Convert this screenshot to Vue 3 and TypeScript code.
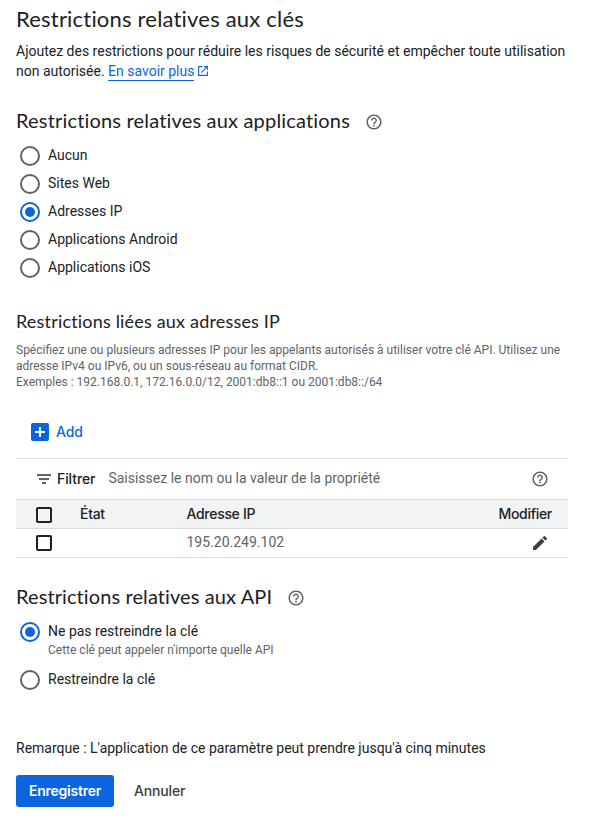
<script setup lang="ts">
import { ref } from 'vue'

interface Option {
  value: string
  label: string
  hint?: string
}

const appOptions: Option[] = [
  { value: 'none', label: 'Aucun' },
  { value: 'web', label: 'Sites Web' },
  { value: 'ip', label: 'Adresses IP' },
  { value: 'android', label: 'Applications Android' },
  { value: 'ios', label: 'Applications iOS' },
]
const apiOptions: Option[] = [
  { value: 'all', label: 'Ne pas restreindre la clé', hint: "Cette clé peut appeler n'importe quelle API" },
  { value: 'some', label: 'Restreindre la clé' },
]
const addresses: string[] = ['195.20.249.102']

const appChoice = ref('ip')
const apiChoice = ref('all')

const helpPath =
  'M11 18h2v-2h-2v2zm1-16C6.48 2 2 6.48 2 12s4.48 10 10 10 10-4.48 10-10S17.52 2 12 2zm0 18c-4.41 0-8-3.59-8-8s3.59-8 8-8 8 3.59 8 8-3.59 8-8 8zm0-14c-2.21 0-4 1.79-4 4h2c0-1.1.9-2 2-2s2 .9 2 2c0 2-3 1.75-3 5h2c0-2.25 3-2.5 3-5 0-2.21-1.79-4-4-4z'
</script>

<template>
  <main class="page">
    <h1 class="title"><span>Restrictions relatives aux clés</span></h1>
    <p class="intro">
      Ajoutez des restrictions pour réduire les risques de sécurité et empêcher toute utilisation<br />
      non autorisée.
      <a class="link">En savoir plus</a>
      <svg class="external" viewBox="0 0 10 10" fill="none" stroke="currentColor" stroke-width="1.1">
        <path d="M4.4 .6H.6v8.8h8.8V5.6M6 .6h3.4V4M9.4.6 3.3 6.7" />
      </svg>
    </p>

    <h2 class="section apps">
      <span>Restrictions relatives aux applications</span>
      <svg class="help" viewBox="0 0 24 24"><path :d="helpPath" /></svg>
    </h2>
    <div class="options">
      <label v-for="o in appOptions" :key="o.value" class="option" @click="appChoice = o.value">
        <span class="radio" :class="{ on: appChoice === o.value }"></span>
        <span class="label">{{ o.label }}</span>
      </label>
    </div>

    <h3 class="subsection"><span>Restrictions liées aux adresses IP</span></h3>
    <p class="description">
      Spécifiez une ou plusieurs adresses IP pour les appelants autorisés à utiliser votre clé API. Utilisez une<br />
      adresse IPv4 ou IPv6, ou un sous-réseau au format CIDR.<br />
      Exemples : 192.168.0.1, 172.16.0.0/12, 2001:db8::1 ou 2001:db8::/64
    </p>

    <button class="add">
      <svg viewBox="0 0 18 18">
        <rect width="18" height="18" rx="2" fill="#0b65de" />
        <path d="M9 4v10M4 9h10" stroke="#fff" stroke-width="2" />
      </svg>
      <span>Add</span>
    </button>

    <section class="table">
      <div class="filter">
        <svg class="funnel" viewBox="0 0 14 10"><path d="M0 0h14v2H0zM2 4h10v2H2zM5 8h4v2H5z" /></svg>
        <span class="filter-name">Filtrer</span>
        <span class="placeholder">Saisissez le nom ou la valeur de la propriété</span>
        <svg class="help" viewBox="0 0 24 24"><path :d="helpPath" /></svg>
      </div>
      <div class="row head">
        <span class="box"></span>
        <span class="state">État</span>
        <span class="address">Adresse IP</span>
        <span class="edit">Modifier</span>
      </div>
      <div v-for="ip in addresses" :key="ip" class="row entry">
        <span class="box"></span>
        <span></span>
        <span class="ip">{{ ip }}</span>
        <svg class="pencil" viewBox="3 3 18 18">
          <path d="M3 17.25V21h3.75L17.81 9.94l-3.75-3.75L3 17.25zM20.71 7.04c.39-.39.39-1.02 0-1.41l-2.34-2.34c-.39-.39-1.02-.39-1.41 0l-1.83 1.83 3.75 3.75 1.83-1.83z" />
        </svg>
      </div>
    </section>

    <h2 class="section api">
      <span>Restrictions relatives aux API</span>
      <svg class="help" viewBox="0 0 24 24"><path :d="helpPath" /></svg>
    </h2>
    <div class="options api-options">
      <label v-for="o in apiOptions" :key="o.value" class="option" @click="apiChoice = o.value">
        <span class="radio" :class="{ on: apiChoice === o.value }"></span>
        <span class="label">
          {{ o.label }}
          <small v-if="o.hint">{{ o.hint }}</small>
        </span>
      </label>
    </div>

    <p class="note">Remarque : L'application de ce paramètre peut prendre jusqu'à cinq minutes</p>
    <div class="actions">
      <button class="save">Enregistrer</button>
      <button class="cancel">Annuler</button>
    </div>
  </main>
</template>

<style>
body {
  background: #fff;
}
</style>

<style scoped>
.page {
  box-sizing: border-box;
  width: 592px;
  height: 827px;
  padding: 5px 24px 0 16px;
  overflow: hidden;
  color: #202124;
  font: 400 14px/20px Roboto, sans-serif;
}
h1, h2, h3, p {
  margin: 0;
  font-weight: 400;
  white-space: nowrap;
}
h1, h2, h3 {
  font-family: Lato, sans-serif;
  font-variant-ligatures: none;
  letter-spacing: 0.18px;
}
button {
  border: 0;
  padding: 0;
  background: none;
  color: inherit;
  font: 500 14px/20px Inter, sans-serif;
  letter-spacing: -0.15px;
}
svg {
  flex: none;
  fill: currentColor;
}
.title {
  height: 36px;
  font-size: 22px;
  line-height: 28px;
  letter-spacing: 0.2px;
}
.link {
  color: #0b65de;
  border-bottom: 1px solid #0b65de;
  padding-bottom: 1px;
}
.external {
  width: 10px;
  height: 10px;
  margin-left: 4px;
  color: #0b65de;
  fill: none;
}
.section {
  display: flex;
  align-items: center;
  height: 28px;
  font-size: 20px;
  line-height: 28px;
}
.section span {
  margin-top: -2px;
}
.apps {
  margin-top: 26px;
}
.help {
  width: 18px;
  height: 18px;
  margin-left: 15px;
  color: #5f6368;
}
.section .help {
  margin-top: 2px;
}
.options {
  margin-top: 6px;
}
.option {
  display: flex;
  height: 28px;
  padding-left: 4px;
}
.radio {
  box-sizing: border-box;
  flex: none;
  display: grid;
  place-items: center;
  width: 20px;
  height: 20px;
  margin: 5px 8px 0 0;
  border: 2px solid #5f6368;
  border-radius: 50%;
}
.radio.on {
  border-color: #0b65de;
}
.radio.on::after {
  content: '';
  width: 10px;
  height: 10px;
  border-radius: 50%;
  background: #0b65de;
}
.label {
  padding-top: 4px;
}
small {
  display: block;
  padding-top: 1px;
  color: #5f6368;
  font-size: 12px;
  line-height: 16px;
}
.subsection {
  margin-top: 28px;
  height: 33px;
  font-size: 18px;
  line-height: 24px;
}
.description {
  color: #5f6368;
  font-size: 12px;
  line-height: 16px;
}
.add {
  display: flex;
  align-items: center;
  gap: 7px;
  height: 36px;
  margin: 24px 0 8px 15px;
  color: #0b65de;
}
.add svg {
  width: 18px;
  height: 18px;
}
.table {
  width: 552px;
  border-top: 1px solid #dadce0;
}
.filter {
  display: flex;
  align-items: center;
  height: 40px;
  padding: 0 19px 0 21px;
}
.funnel {
  width: 14px;
  height: 10px;
  color: #5f6368;
}
.filter-name {
  margin-left: 6px;
  font: 500 14px/20px Inter, sans-serif;
  letter-spacing: -0.1px;
}
.placeholder {
  margin: -2px auto 0 13px;
  color: #5f6368;
}
.row {
  display: grid;
  grid-template-columns: 44px 106.5px 1fr auto;
  align-items: center;
  height: 28px;
  padding: 0 16px 0 20px;
  border-bottom: 1px solid #dadce0;
}
.head {
  border-top: 1px solid #dadce0;
  background: #f1f3f4;
  font: 500 14px/20px Inter, sans-serif;
  letter-spacing: -0.3px;
}
.box {
  box-sizing: border-box;
  width: 16px;
  height: 16px;
  margin-top: 1px;
  border: 2px solid #202124;
  border-radius: 2px;
}
.entry .box {
  margin-top: -1px;
}
.ip {
  margin-top: -2px;
  color: #5f6368;
}
.pencil {
  width: 14px;
  height: 14px;
  margin-right: 5px;
  color: #3c4043;
}
.api {
  margin-top: 25px;
  letter-spacing: 0.1px;
}
.api-options {
  display: grid;
  grid-template-rows: 48px 28px;
}
.note {
  margin-top: 45px;
}
.actions {
  display: flex;
  gap: 20px;
  margin-top: 17px;
}
.save {
  width: 98px;
  height: 32px;
  border-radius: 3px;
  background: #0b65de;
  color: #fff;
  font-weight: 600;
  letter-spacing: -0.25px;
}
.cancel {
  color: #3c4043;
}
</style>
